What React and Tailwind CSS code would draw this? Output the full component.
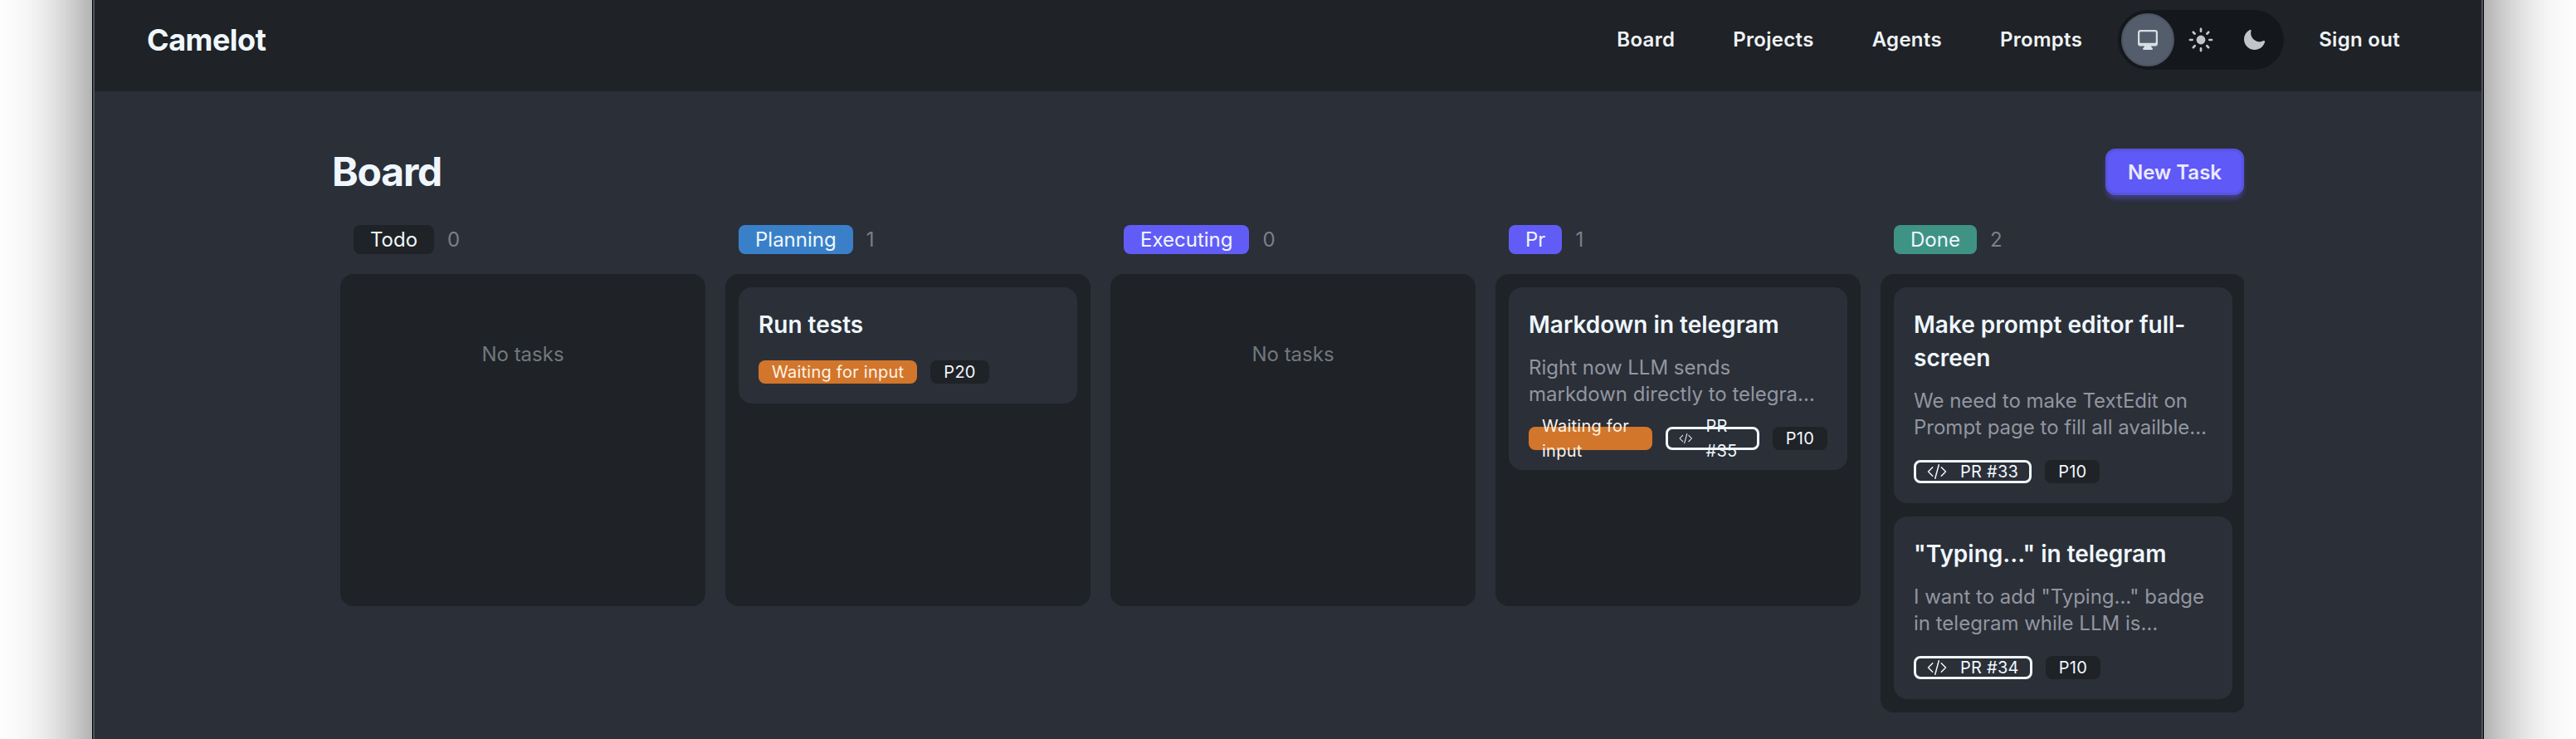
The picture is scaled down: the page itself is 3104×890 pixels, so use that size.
import React from "react";
import { HiMiniComputerDesktop, HiMiniSun, HiMiniMoon } from "react-icons/hi2";

const NAV_ITEMS = ["Board", "Projects", "Agents", "Prompts"];

const COLUMNS = [
  { title: "Todo", badge: "bg-[#1f2226]", tasks: [] },
  {
    title: "Planning",
    badge: "bg-[#3a80c9]",
    tasks: [{ title: "Run tests", waiting: true, priority: "P20" }],
  },
  { title: "Executing", badge: "bg-[#625cf7]", tasks: [] },
  {
    title: "Pr",
    badge: "bg-[#625cf7]",
    tasks: [
      {
        title: "Markdown in telegram",
        text: "Right now LLM sends markdown directly to telegram and it looks broken there",
        waiting: true,
        pr: "PR #35",
        priority: "P10",
      },
    ],
  },
  {
    title: "Done",
    badge: "bg-[#3f9384]",
    tasks: [
      {
        title: "Make prompt editor full-screen",
        text: "We need to make TextEdit on Prompt page to fill all availble space on the screen",
        pr: "PR #33",
        priority: "P10",
      },
      {
        title: '"Typing..." in telegram',
        text: 'I want to add "Typing..." badge in telegram while LLM is generating an answer for the user',
        pr: "PR #34",
        priority: "P10",
      },
    ],
  },
];

const CodeIcon = () => (
  <svg
    viewBox="0 0 24 24"
    fill="none"
    stroke="currentColor"
    strokeWidth="1.5"
    strokeLinecap="round"
    strokeLinejoin="round"
    className="w-6 h-6"
  >
    <path d="M17.25 6.75 22.5 12l-5.25 5.25m-10.5 0L1.5 12l5.25-5.25m7.5-3-4.5 16.5" />
  </svg>
);

const TaskCard = ({ task }) => (
  <div className="bg-[#2b2f38] rounded-2xl p-6">
    <h3 className="pt-px -mb-px text-[28px] leading-[40px] font-semibold text-[#eff7fd]">{task.title}</h3>
    {task.text && (
      <p className="mt-[17px] -mb-px text-[24px] leading-[32px] text-[#9296a0] line-clamp-2">{task.text}</p>
    )}
    <div className="mt-6 flex items-center gap-4 tracking-[0.25px]">
      {task.waiting && (
        <span className="inline-flex items-center justify-center h-7 px-4 rounded-lg bg-[#d2762b] text-[20px] leading-[30px] text-[#fdf3e8]">
          Waiting for input
        </span>
      )}
      {task.pr && (
        <span className="inline-flex items-center justify-center gap-4 h-7 px-[13px] rounded-lg border-[3px] border-[#eff7fd] text-[20px] leading-[30px] text-[#eff7fd]">
          <CodeIcon />
          <span>{task.pr}</span>
        </span>
      )}
      <span className="inline-flex items-center justify-center h-7 px-4 rounded-lg bg-[#1f2226] text-[20px] leading-[30px] text-[#eff7fd]">
        {task.priority}
      </span>
    </div>
  </div>
);

const Column = ({ column }) => (
  <div className="w-[440px] shrink-0">
    <div className="flex items-center gap-4 px-4 mb-6">
      <span
        className={`inline-flex items-center h-[35px] px-5 pt-px rounded-lg text-[24px] leading-[32px] text-[#eff7fd] ${column.badge}`}
      >
        {column.title}
      </span>
      <span className="pt-px text-[24px] leading-[32px] text-[#7b8089]">{column.tasks.length}</span>
    </div>
    <div className="bg-[#1f2226] rounded-2xl p-4 min-h-[400px] flex flex-col gap-4">
      {column.tasks.length === 0 && (
        <p className="pt-[65px] pb-[63px] text-center text-[24px] leading-[32px] text-[#72787e]">No tasks</p>
      )}
      {column.tasks.map((task) => (
        <TaskCard key={task.title} task={task} />
      ))}
    </div>
  </div>
);

export default function App() {
  return (
    <div className="h-[890px] overflow-hidden bg-white px-[111px] font-['Inter',sans-serif]">
      {/* window runs past the page top and bottom so its shadow stays even */}
      <div className="-mt-[200px] h-[1290px] border-x border-black shadow-[0_0_100px_rgba(0,0,0,0.6)]">
        <div className="h-full pt-[200px] border-x-2 border-[#4f535a] bg-[#2b2f38]">
          <header className="h-[110px] bg-[#1f2226] pl-[63px] pr-[66px] flex items-center justify-between pb-[14px]">
            <span className="text-[36px] leading-[48px] font-bold tracking-[-0.5px] text-[#eff7fd]">Camelot</span>
            <nav className="flex items-center gap-2">
              {NAV_ITEMS.map((item) => (
                <a key={item} className="px-[31px] text-[24px] leading-[32px] font-semibold tracking-[0.3px] text-[#eff3f6]">
                  {item}
                </a>
              ))}
              <div className="ml-1 mr-[2px] h-[72px] rounded-full bg-[#14171b] p-1 flex">
                <button className="w-16 h-16 rounded-full bg-[#545d6b] border-2 border-[#4d5562] flex items-center justify-center text-[#d5dfe6]">
                  <HiMiniComputerDesktop size={30} />
                </button>
                <button className="w-16 h-16 flex items-center justify-center text-[#c2c6ca]">
                  <HiMiniSun size={36} />
                </button>
                <button className="w-16 h-16 flex items-center justify-center text-[#c2c6ca]">
                  <HiMiniMoon size={30} />
                </button>
              </div>
              <a className="px-8 text-[24px] leading-[32px] font-semibold tracking-[0.3px] text-[#eff3f6]">Sign out</a>
            </nav>
          </header>
          <main className="w-[2304px] mx-auto pt-[69px]">
            <div className="flex items-center justify-between mb-9">
              <h1 className="text-[48px] leading-[56px] font-bold tracking-[-1.2px] text-[#eff7fd]">Board</h1>
              <button className="h-14 w-[167px] pt-px rounded-xl bg-[#5e59f7] border-[3px] border-[#5755df] text-[24px] font-semibold text-[#eceafe] shadow-[0_5px_5px_rgba(94,89,247,0.35)]">
                New Task
              </button>
            </div>
            <div className="flex gap-6 pl-[10px] overflow-hidden items-start">
              {COLUMNS.map((column) => (
                <Column key={column.title} column={column} />
              ))}
            </div>
          </main>
        </div>
      </div>
    </div>
  );
}
